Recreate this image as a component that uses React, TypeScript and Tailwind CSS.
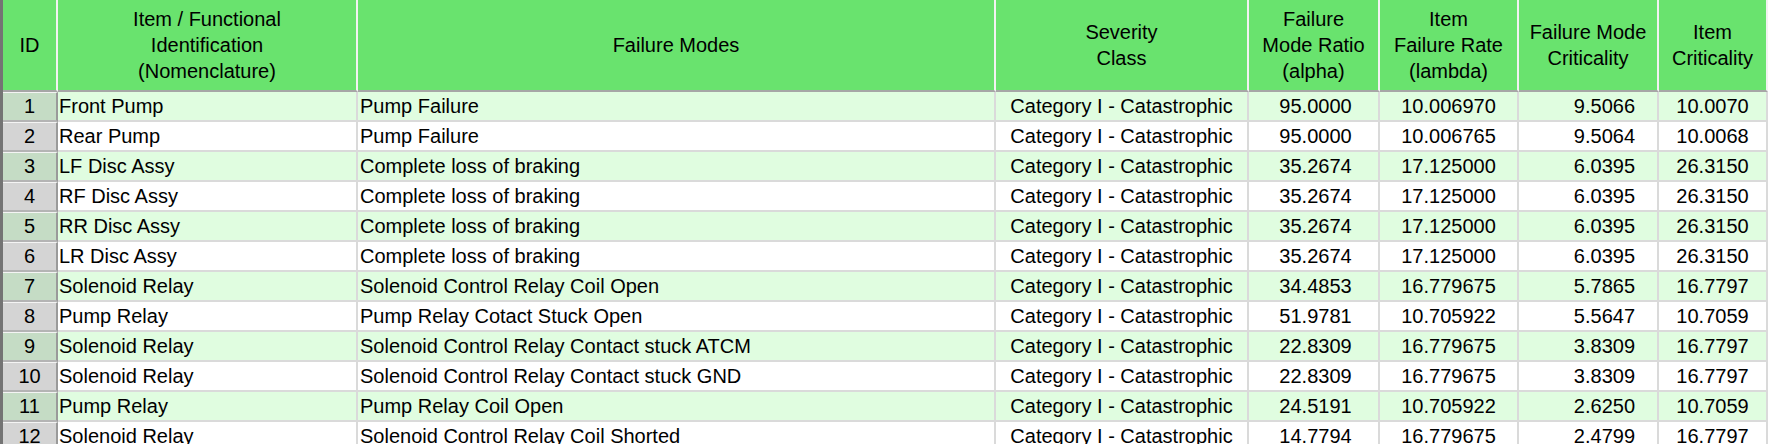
const rows = [
  ["1", "Front Pump", "Pump Failure", "95.0000", "10.006970", "9.5066", "10.0070"],
  ["2", "Rear Pump", "Pump Failure", "95.0000", "10.006765", "9.5064", "10.0068"],
  ["3", "LF Disc Assy", "Complete loss of braking", "35.2674", "17.125000", "6.0395", "26.3150"],
  ["4", "RF Disc Assy", "Complete loss of braking", "35.2674", "17.125000", "6.0395", "26.3150"],
  ["5", "RR Disc Assy", "Complete loss of braking", "35.2674", "17.125000", "6.0395", "26.3150"],
  ["6", "LR Disc Assy", "Complete loss of braking", "35.2674", "17.125000", "6.0395", "26.3150"],
  ["7", "Solenoid Relay", "Solenoid Control Relay Coil Open", "34.4853", "16.779675", "5.7865", "16.7797"],
  ["8", "Pump Relay", "Pump Relay Cotact Stuck Open", "51.9781", "10.705922", "5.5647", "10.7059"],
  ["9", "Solenoid Relay", "Solenoid Control Relay Contact stuck ATCM", "22.8309", "16.779675", "3.8309", "16.7797"],
  ["10", "Solenoid Relay", "Solenoid Control Relay Contact stuck GND", "22.8309", "16.779675", "3.8309", "16.7797"],
  ["11", "Pump Relay", "Pump Relay Coil Open", "24.5191", "10.705922", "2.6250", "10.7059"],
  ["12", "Solenoid Relay", "Solenoid Control Relay Coil Shorted", "14.7794", "16.779675", "2.4799", "16.7797"],
];

const headers = [
  ["ID"],
  ["Item / Functional", "Identification", "(Nomenclature)"],
  ["Failure Modes"],
  ["Severity", "Class"],
  ["Failure", "Mode Ratio", "(alpha)"],
  ["Item", "Failure Rate", "(lambda)"],
  ["Failure Mode", "Criticality"],
  ["Item", "Criticality"],
];

export default function App() {
  return (
    <div className="h-[444px] w-[1768px] overflow-hidden bg-white font-['Liberation_Sans',Arial,sans-serif] text-[20px] text-black">
      <div className="grid grid-cols-[55px_300px_638px_253px_131px_139px_140px_109px] border-l-[3px] border-[#747474]">
        {/* Header */}
        {headers.map((lines, i) => (
          <div
            key={i}
            className="flex h-[92px] flex-col items-center justify-center border-r-2 border-b-2 border-r-[#f2f2f2] border-b-[#a6a6a6] bg-[#69e36e] text-center leading-[26px]"
          >
            {lines.map((l) => (
              <span key={l}>{l}</span>
            ))}
          </div>
        ))}

        {/* Rows */}
        {rows.map((r, idx) => {
          const green = idx % 2 === 0;
          const bg = green ? "bg-[#e0fde0]" : "bg-white";
          const cell = `h-[30px] border-r-2 border-b-2 border-[#dadada] leading-[28px] whitespace-nowrap overflow-hidden ${bg}`;
          return (
            <div key={r[0]} className="contents">
              <div
                className={`h-[30px] border-t border-t-[#f4f4f4] border-r-2 border-b-2 border-r-[#9a9a9a] border-b-[#b4b4b4] text-center leading-[27px] ${
                  green ? "bg-[#c5dcc5]" : "bg-[#d4d4d4]"
                }`}
              >
                {r[0]}
              </div>
              <div className={`${cell} pl-[1px]`}>{r[1]}</div>
              <div className={`${cell} pl-[2px]`}>{r[2]}</div>
              <div className={`${cell} text-center`}>Category I - Catastrophic</div>
              <div className={`${cell} text-center pl-[4px]`}>{r[3]}</div>
              <div className={`${cell} text-center`}>{r[4]}</div>
              <div className={`${cell} text-right pr-[22px]`}>{r[5]}</div>
              <div className={`${cell} text-center`}>{r[6]}</div>
            </div>
          );
        })}
      </div>
    </div>
  );
}
